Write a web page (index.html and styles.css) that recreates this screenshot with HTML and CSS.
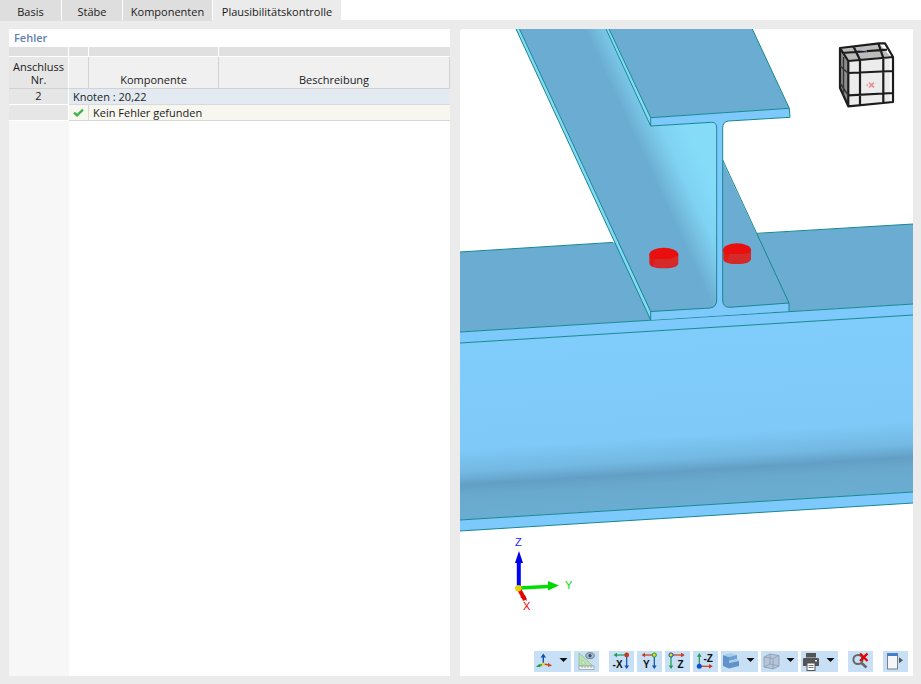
FILE: index.html
```html
<!DOCTYPE html>
<html lang="de">
<head>
<meta charset="utf-8">
<title>Plausibilitätskontrolle</title>
<link rel="stylesheet" href="styles.css">
</head>
<body>
<nav class="tabs">
  <div class="tab tab-basis">Basis</div>
  <div class="tab tab-staebe">Stäbe</div>
  <div class="tab tab-komp">Komponenten</div>
  <div class="tab tab-active">Plausibilitätskontrolle</div>
</nav>
<main class="main">
  <section class="panel">
    <div class="panel-title">Fehler</div>
    <div class="grid">
      <div class="top c1"></div><div class="top c2"></div><div class="top c3"></div><div class="top c4"></div>
      <div class="head h1">Anschluss<br>Nr.</div><div class="head h2"></div><div class="head h3">Komponente</div><div class="head h4">Beschreibung</div>
      <div class="idx">2</div><div class="node">Knoten : 20,22</div>
      <div class="idx"></div>
      <div class="ok-icon"><svg width="11" height="9" viewBox="0 0 11 9"><path d="M1 4.6 L4 7.4 L10 1.6" fill="none" stroke="#3cb54a" stroke-width="2.2"/></svg></div>
      <div class="ok-text">Kein Fehler gefunden</div>
    </div>
    <div class="filler"><div class="filler-left"></div></div>
  </section>
  <section class="view">
    <svg class="scene" width="453" height="618" viewBox="460 29 453 618">
      <defs>
        <linearGradient id="webface" gradientUnits="userSpaceOnUse" x1="686" y1="329" x2="697" y2="506">
          <stop offset="0" stop-color="#80ccfb"/>
          <stop offset=".6" stop-color="#7ec9f8"/>
          <stop offset=".73" stop-color="#72b8e2"/>
          <stop offset=".8" stop-color="#639fc5"/>
          <stop offset=".86" stop-color="#69a9ce"/>
          <stop offset="1" stop-color="#6badd2"/>
        </linearGradient>
        <linearGradient id="fillet" gradientUnits="userSpaceOnUse" x1="580" y1="29" x2="629.4" y2="6.1">
          <stop offset="0" stop-color="#6badd2"/>
          <stop offset=".08" stop-color="#6badd2"/>
          <stop offset=".33" stop-color="#76c0e2"/>
          <stop offset=".58" stop-color="#80d2f2"/>
          <stop offset="1" stop-color="#84dcf9"/>
        </linearGradient>
      </defs>
      <polygon class="dark" points="460,252 913,224 913,304 460,332"/>
      <polygon points="460,343 913,315 913,492 460,520" fill="url(#webface)"/>
      <polygon class="blue" points="460,332 913,304 913,315 460,343"/>
      <polygon class="blue" points="460,520 913,492 913,503 460,531"/>
      <path class="edge" d="M460 252 L613 242.4 M757 233.3 L913 224 M460 332 L913 304 M460 343 L913 315 M460 520 L913 492 M460 531 L913 503"/>
      <polygon class="dark" points="722,160 789,303 730,307.3 722,300"/>
      <polygon class="pale" points="516,29 650.7,320 650.7,311.5 519.5,29"/>
      <path d="M519.5 29 L650.7 311.5 L710 308 Q716.7 307 716.7 300 L716.7 128 Q716.7 122 711 122.3 L650.7 126 L606 29 Z" fill="url(#fillet)"/>
      <polygon class="blue" points="716.7,120 722.7,120 722.7,312 716.7,312"/>
      <path class="blue" d="M650.7 311.5 L710 308 Q716.7 307 716.7 300 L722.7 300 Q722.7 307.5 730 307.3 L789 303 L789 311 L650.7 320 Z"/>
      <polygon class="pale" points="606,29 609,29 650.7,117.7 650.7,126"/>
      <polygon class="dark" points="609,29 752.3,29 789.3,108.3 650.7,117.7"/>
      <path class="blue" d="M650.7 117.7 L789.3 108.3 L790 117.3 L728.5 121 Q722.7 121.5 722.7 128 L716.7 128 Q716.7 122 711.7 122.3 L650.7 126 Z"/>
      <path class="edge" d="M516 29 L650.7 320 L650.7 311.5 L519.5 29 M606 29 L650.7 126 L650.7 117.7 L609 29 M752.3 29 L789.3 108.3 L790 117.3 L728.5 121 Q722.7 121.5 722.7 128 L722.7 300 Q722.7 307.5 730 307.3 L789 303 L789 311 M650.7 117.7 L789.3 108.3 M650.7 126 L711.7 122.3 Q716.7 122 716.7 128 L716.7 300 Q716.7 307 710 308 L650.7 311.5 M722.7 160 L789 303"/>
      <g class="bolt">
        <path class="bolt-side" d="M649.3 254 L678.3 254 L678.3 263 Q678 268.3 663.8 268.3 Q649.5 268.3 649.3 263 Z"/>
        <ellipse class="bolt-top" cx="663.8" cy="254.5" rx="14.5" ry="6.8"/>
        <path class="bolt-facet" d="M653 266 L655 259 L670 259 L678 256 L678 263 Q676 267 664 268 Q657 268 653 266 Z"/>
      </g>
      <g class="bolt">
        <path class="bolt-side" d="M723.3 250 L751 250 L751 259 Q750.5 264 737 264 Q723.5 264 723.3 259 Z"/>
        <ellipse class="bolt-top" cx="737" cy="250" rx="14" ry="6.8"/>
        <path class="bolt-facet" d="M727 262 L729 254 L744 254 L751 252 L751 259 Q749 263 737 264 Q731 264 727 262 Z"/>
      </g>
      <!-- view cube -->
      <g class="cube">
        <path class="cube-left" d="M840 48 L848.3 62 L848.3 106.7 L840 88 Z"/>
        <path class="cube-top" d="M840 48 L879 43.5 L890 56 L848.3 61 Z"/>
        <path class="cube-front" d="M848.3 61 L890 57 L890 103.3 L848.3 106.7 Z"/>
        <path class="cube-line" d="M840 48 L879 43.3 L885 43.3 L893 57 L893 102 L848.3 106.3 L840 88 Z M840 48 L848.3 61 L893 57 M848.3 61 L848.3 106.3 M860 60 L860 105.5 M883.3 58 L883.3 103.5 M848.3 73 L893 71 M848.3 95.3 L893 93 M842 53 L887 49.7 M853.5 46.5 L860 60 M878.5 43.7 L883.3 58"/>
        <path class="cube-side" d="M843.5 57 L843.5 96 M840 66 L848 73 M840 83 L848 95"/>
        <path class="cube-x" d="M869 82.5 L874 87.5 M874 82.5 L869 87.5 M866.5 85 L868 85"/>
        <path class="cube-mark" d="M860 50 L867 51"/>
      </g>
      <!-- axes -->
      <g>
        <path d="M518.8 588 L518.8 562" stroke="#0000ff" stroke-width="4" fill="none"/>
        <polygon points="519,551 523,563 515,563" fill="#0000e8"/>
        <path d="M519 588 L548 586.5" stroke="#00e000" stroke-width="3.4" fill="none"/>
        <polygon points="559,585.5 548,581 548,590.5" fill="#00d800"/>
        <path d="M519 589 L525 600" stroke="#f00000" stroke-width="4" fill="none"/>
        <polygon points="527,601 520,597 525,595" fill="#e00000"/>
        <circle cx="518.3" cy="588.3" r="3.2" fill="#e6d200"/>
        <text class="ax ax-z" x="515" y="545.5">Z</text>
        <text class="ax ax-y" x="565" y="589">Y</text>
        <text class="ax ax-x" x="523" y="610">X</text>
      </g>
    </svg>
    <div class="toolbar">
      <div class="btn btn-wide">
        <svg width="37" height="21" viewBox="0 0 37 21"><path d="M9.3 13 L9.3 5" stroke="#1050b0" stroke-width="1.4"/><polygon points="9.3,2.5 12,6.5 6.6,6.5" fill="#1050b0"/><path d="M9.3 13 L4.5 15" stroke="#2a9a40" stroke-width="1.4"/><polygon points="2,16 5.5,12.8 6.5,16" fill="#2a9a40"/><path d="M9.3 13 L15 14" stroke="#c84a20" stroke-width="1.4"/><polygon points="18,14.5 14,11.8 14,16" fill="#c84a20"/><circle cx="9.3" cy="13" r="1.6" fill="#e8d820"/><polygon class="caret" points="25.5,7 33.5,7 29.5,11"/></svg>
      </div>
      <div class="btn gap-r">
        <svg width="25" height="21" viewBox="0 0 25 21"><polygon points="5,2 19,15 5,15" fill="#b6e6ae" stroke="#9ab89a" stroke-width=".8"/><polygon points="8,9 8,13 12,13" fill="#d8f2d0" stroke="#9ab89a" stroke-width=".6"/><rect x="5" y="15" width="15" height="3.5" fill="#f0f2f2" stroke="#9aa2a8" stroke-width=".8"/><path d="M8 15v2M11 15v2M14 15v2M17 15v2" stroke="#808890" stroke-width=".6"/><ellipse cx="16" cy="4.7" rx="4.3" ry="3" fill="#a8bccb" stroke="#5a6a80" stroke-width=".8"/><circle cx="16" cy="4.7" r="1.6" fill="#3a4a66"/></svg>
      </div>
      <div class="btn">
        <svg width="25" height="21" viewBox="0 0 25 21"><path d="M17.7 4 L7 4" stroke="#1f9a4a" stroke-width="1.2"/><polygon points="4.5,4 8,1.8 8,6.2" fill="#1f9a4a"/><path d="M17.7 4 L17.7 15" stroke="#1050b0" stroke-width="1.2"/><polygon points="17.7,18 15.4,14.5 20,14.5" fill="#1050b0"/><circle cx="17.7" cy="4" r="2.4" fill="#c83a18"/><text class="ico" x="3.6" y="16.5">-X</text></svg>
      </div>
      <div class="btn">
        <svg width="25" height="21" viewBox="0 0 25 21"><path d="M17.3 4 L7 4" stroke="#c83a18" stroke-width="1.2"/><polygon points="4.5,4 8,1.8 8,6.2" fill="#c83a18"/><path d="M17.3 4 L17.3 15" stroke="#1050b0" stroke-width="1.2"/><polygon points="17.3,18 15,14.5 19.6,14.5" fill="#1050b0"/><circle cx="17.3" cy="4" r="2.1" fill="#d8d820" stroke="#2a9a40"/><text class="ico" x="6" y="16.5">Y</text></svg>
      </div>
      <div class="btn">
        <svg width="25" height="21" viewBox="0 0 25 21"><path d="M6 4 L17 4" stroke="#c83a18" stroke-width="1.2"/><polygon points="19.8,4 16,1.8 16,6.2" fill="#c83a18"/><path d="M6 4 L6 15" stroke="#1f9a4a" stroke-width="1.2"/><polygon points="6,18 3.7,14.5 8.3,14.5" fill="#1f9a4a"/><circle cx="6" cy="4" r="2.1" fill="#e0d820" stroke="#1050b0"/><text class="ico" x="12.5" y="17">Z</text></svg>
      </div>
      <div class="btn">
        <svg width="25" height="21" viewBox="0 0 25 21"><path d="M6.3 15 L6.3 5" stroke="#1f9a4a" stroke-width="1.2"/><polygon points="6.3,2 4,5.8 8.6,5.8" fill="#1f9a4a"/><path d="M6.3 15.3 L17 15.3" stroke="#c83a18" stroke-width="1.2"/><polygon points="19.8,15.3 16,13 16,17.5" fill="#c83a18"/><circle cx="6.3" cy="15.3" r="2.5" fill="#1050c8"/><text class="ico" x="10.5" y="10.5">-Z</text></svg>
      </div>
      <div class="btn btn-wide">
        <svg width="37" height="21" viewBox="0 0 37 21"><polygon points="2,4 8,6 8,17.5 2,15" fill="#5f93c8"/><polygon points="2,4 10,2 16,4 8,6" fill="#a8cde9"/><polygon points="8,6 16,4 16,8 8,10" fill="#6d9fd0"/><polygon points="8,10 16,8 18,10 8,12" fill="#a8cde9"/><polygon points="8,12 18,10 18,15 8,17.5" fill="#5f93c8"/></svg>
        <svg class="caret-svg" width="37" height="21" viewBox="0 0 37 21"><polygon class="caret" points="25.5,7 33.5,7 29.5,11"/></svg>
      </div>
      <div class="btn btn-wide">
        <svg width="37" height="21" viewBox="0 0 37 21"><polygon points="3,6 9,3 18,4.5 18,15 12,18 3,16" fill="#b6c6d8" stroke="#8d9db2" stroke-width=".9"/><path d="M3 6 L12 7.5 L18 4.5 M12 7.5 L12 18 M9 3 L9 13 L3 16 M9 13 L18 15" fill="none" stroke="#8d9db2" stroke-width=".8"/><polygon class="caret" points="25.5,7 33.5,7 29.5,11"/></svg>
      </div>
      <div class="btn btn-wide gap-r">
        <svg width="37" height="21" viewBox="0 0 37 21"><rect x="5" y="2" width="10" height="4.5" fill="#555"/><path d="M2 8 Q2 7 3 7 L17 7 Q18 7 18 8 L18 15 L2 15 Z" fill="#555"/><rect x="6" y="12" width="8" height="7.5" fill="#fff" stroke="#555"/><path d="M7.5 14.5h5M7.5 16.5h5" stroke="#555" stroke-width=".8"/><rect x="14" y="9" width="2" height="1.4" fill="#fff"/><polygon class="caret" points="25.5,7 33.5,7 29.5,11"/></svg>
      </div>
      <div class="btn gap-r">
        <svg width="25" height="21" viewBox="0 0 25 21"><circle cx="10" cy="8.5" r="4.6" fill="none" stroke="#666" stroke-width="2"/><path d="M13.5 12 L18.5 16.5" stroke="#666" stroke-width="2.6"/><path d="M12 2.5 L19.5 10 M19.5 2.5 L12 10" stroke="#e80000" stroke-width="2.4"/></svg>
      </div>
      <div class="btn">
        <svg width="25" height="21" viewBox="0 0 25 21"><rect x="4.5" y="2.5" width="10" height="15.5" fill="#f4f6f8" stroke="#7a8088"/><rect x="4.5" y="2.5" width="10" height="2.5" fill="#3a7ed8"/><polygon points="16,6.3 20,9.3 16,12.3" fill="#555"/></svg>
      </div>
    </div>
  </section>
</main>
</body>
</html>
```

FILE: styles.css
```css
* { box-sizing: border-box; }
html, body { margin: 0; height: 100%; }
body {
  width: 921px;
  height: 684px;
  display: flex;
  flex-direction: column;
  background: #ebebeb;
  font-family: "Open Sans", "Noto Sans", sans-serif;
  font-size: 11px;
  color: #1a1a1a;
  overflow: hidden;
}
.tabs { display: flex; height: 20px; background: #fff; flex: none; }
.tab {
  background: #dedede;
  text-align: center;
  line-height: 23px;
  height: 21px;
  position: relative;
  z-index: 1;
}
.tab-basis { width: 61px; margin-right: 1px; }
.tab-staebe { width: 60px; margin-right: 1px; }
.tab-komp { width: 89px; margin-right: 1px; }
.tab-active { width: 128px; background: #ebebeb; height: 20px; }
.main {
  flex: 1;
  display: flex;
  gap: 10px;
  padding: 9px 8px 8px 9px;
  min-height: 0;
}
.panel {
  width: 441px;
  background: #fff;
  display: flex;
  flex-direction: column;
}
.panel-title {
  height: 18px;
  line-height: 18px;
  padding-left: 5px;
  color: #5f7fb0;
  font-weight: 600;
}
.grid {
  display: grid;
  grid-template-columns: 60px 20px 130px 231px;
  grid-template-rows: 10px 32px 16px 16px;
}
.top { background: #e0e0e0; border-right: 1px solid #fff; border-bottom: 1px solid #fff; }
.top.c4 { border-right: 0; }
.head {
  background: #f0f0f0;
  border-bottom: 1px solid #d2d2d2;
  border-right: 1px solid #d2d2d2;
  text-align: center;
  display: flex;
  align-items: flex-end;
  justify-content: center;
  line-height: 13px;
  padding-bottom: 2px;
}
.head.h1 {
  background: #e6e6e6;
  border-right: 1px solid #fff;
  display: block;
  padding-top: 3px;
}
.idx {
  background: #e6e6e6;
  border-right: 1px solid #fff;
  border-bottom: 1px solid #fff;
  text-align: center;
  line-height: 13px;
}
.node {
  grid-column: 2 / 5;
  background: #e3eaf1;
  border-bottom: 1px solid #d6dade;
  padding-left: 4px;
  line-height: 15px;
}
.ok-icon {
  background: #f7f7f0;
  border-right: 1px solid #d8d8d8;
  border-bottom: 1px solid #d8d8d8;
  display: flex;
  align-items: center;
  justify-content: center;
}
.ok-text {
  grid-column: 3 / 5;
  background: #f7f7f0;
  border-bottom: 1px solid #d8d8d8;
  padding-left: 4px;
  line-height: 15px;
}
.filler { flex: 1; display: flex; }
.filler-left { width: 60px; background: #f7f7f7; }
.view {
  flex: 1;
  background: #fff;
  display: flex;
  flex-direction: column;
  border-top-left-radius: 3px;
  overflow: hidden;
}
.scene { display: block; flex: none; }
.dark { fill: #6badd2; }
.blue { fill: #7dc9fb; }
.pale { fill: #86d8f5; }
.edge { fill: none; stroke: #16888f; stroke-width: 1; }
.bolt { filter: blur(.3px); }
.bolt-side { fill: #e01a1a; }
.bolt-top { fill: #ea0f0f; }
.bolt-facet { fill: #d42a2a; }
.cube { filter: blur(.35px); }
.cube-left { fill: #8c8c8c; }
.cube-top { fill: #bcbcbc; }
.cube-front { fill: #ececec; }
.cube-line { fill: none; stroke: #1c1c1c; stroke-width: 2.2; stroke-linejoin: round; }
.cube-side { fill: none; stroke: #333; stroke-width: 1.4; }
.cube-x { fill: none; stroke: #e88a8a; stroke-width: 1.6; }
.cube-mark { fill: none; stroke: #a8b0d8; stroke-width: 1; }
.ax { font-family: "Liberation Sans", sans-serif; font-size: 11px; }
.ax-z { fill: #2020ff; }
.ax-y { fill: #00e000; }
.ax-x { fill: #f00000; }
.toolbar {
  display: flex;
  justify-content: flex-end;
  gap: 3px;
  padding: 4px 5px 0 0;
}
.btn { width: 25px; height: 21px; background: #c8e0f5; flex: none; position: relative; }
.btn svg { display: block; }
.btn .caret-svg { position: absolute; left: 0; top: 0; }
.btn-wide { width: 37px; }
.gap-r { margin-right: 7px; }
.caret { fill: #111; }
.ico { font-family: "Liberation Sans", sans-serif; font-size: 10px; font-weight: 700; fill: #111; }
```
